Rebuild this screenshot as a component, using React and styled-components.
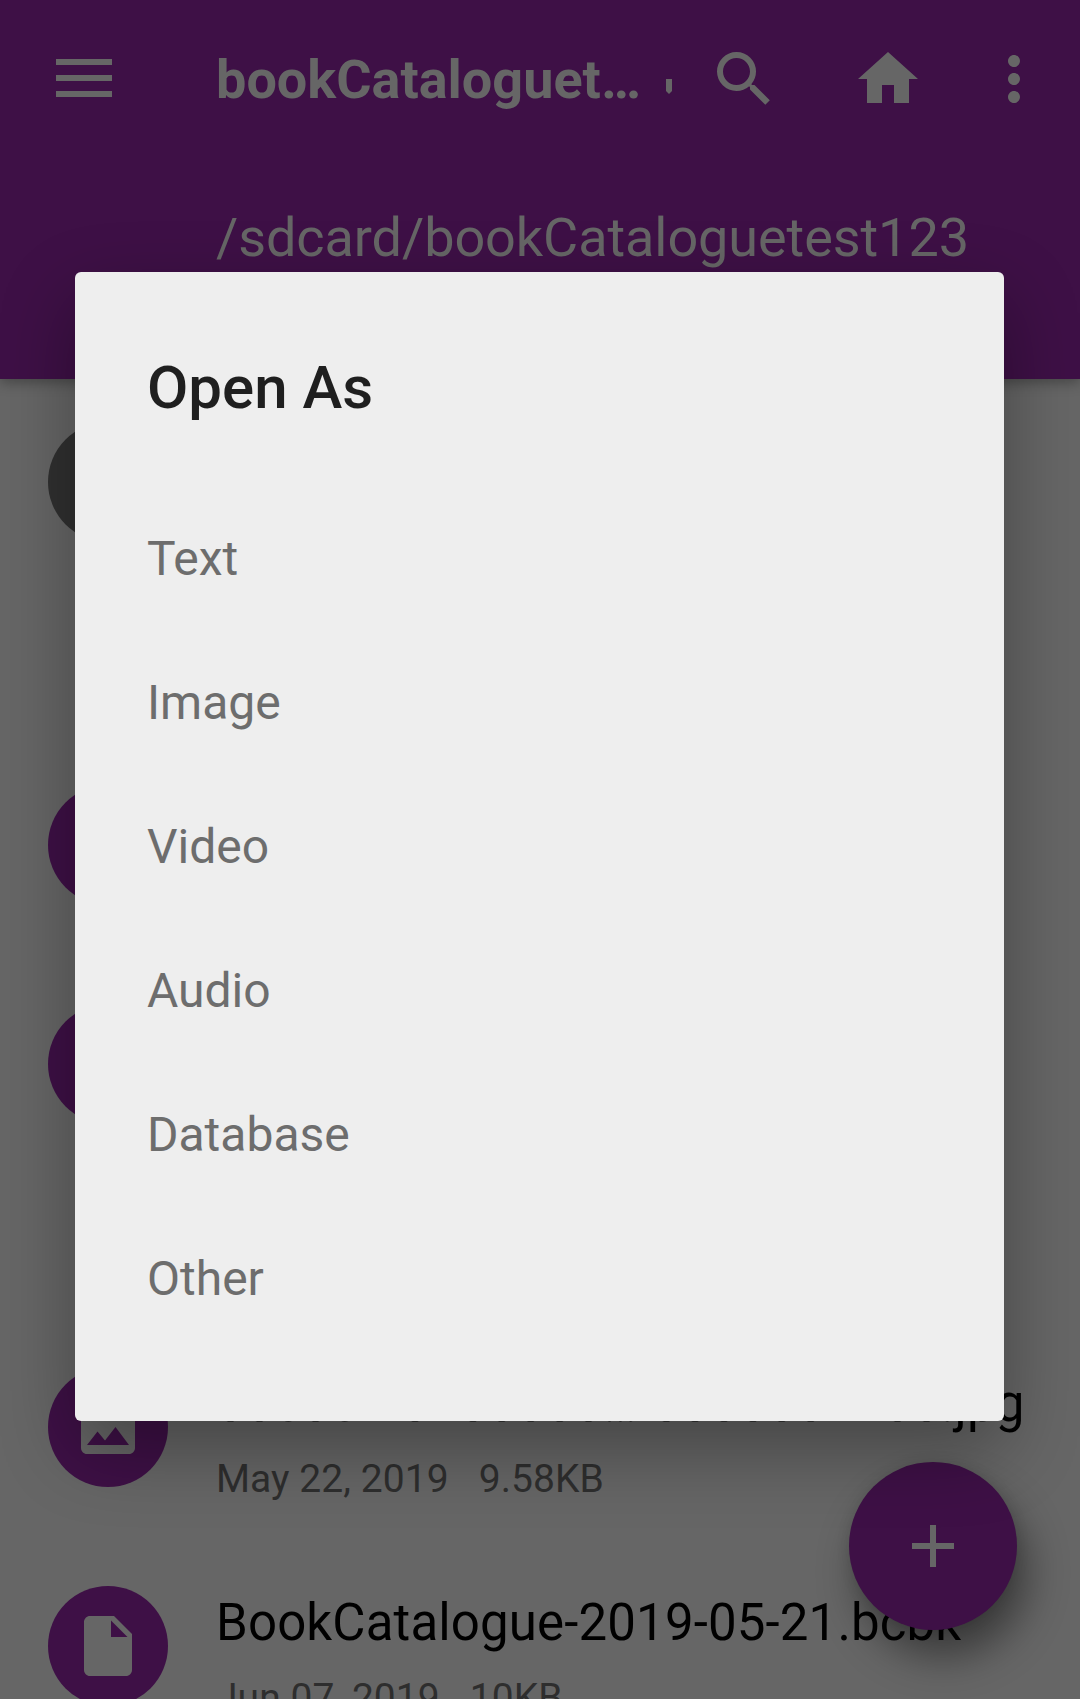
import React from 'react';
import styled, { createGlobalStyle } from 'styled-components';

const Global = createGlobalStyle`
  * { box-sizing: border-box; }
  body { margin: 0; font-family: Roboto, "Noto Sans", sans-serif; background: #666; }
`;

const Screen = styled.div`
  position: relative;
  width: 1080px;
  height: 1699px;
  overflow: hidden;
  background: #666;
`;

const AppBar = styled.header`
  position: relative;
  z-index: 1;
  height: 379px;
  margin-bottom: -7px;
  background: #3e1046;
  color: #666;
  box-shadow: 0 4px 12px rgba(0, 0, 0, 0.3);
`;

const Toolbar = styled.div`
  display: flex;
  align-items: center;
  height: 158px;
  padding: 0 30px 0 48px;
`;

const Icon = styled.svg`
  display: block;
  flex: none;
  width: 72px;
  height: 72px;
  fill: #666;
`;

const Title = styled.h1`
  flex: none;
  width: 446px;
  margin: 2px 0 0 96px;
  font-size: 54px;
  line-height: 64px;
  font-weight: 700;
  white-space: nowrap;
`;

const Caret = styled.svg`
  flex: none;
  width: 6px;
  height: 15px;
  margin: 15px 36px 0 4px;
  fill: #666;
`;

const Actions = styled.div`
  display: flex;
  gap: 72px;
`;

const Overflow = styled.div`
  margin-left: 54px;
`;

const Path = styled.div`
  padding: 48px 0 0 216px;
  font-size: 54px;
  line-height: 64px;
  letter-spacing: -0.08px;
  white-space: nowrap;
`;

const Row = styled.div`
  display: flex;
  height: 219px;
  padding: 50px 0 0 48px;
`;

const SectionGap = styled.div`
  height: 144px;
`;

const Badge = styled.div`
  display: flex;
  align-items: center;
  justify-content: center;
  flex: none;
  width: 120px;
  height: 120px;
  border-radius: 50%;
  background: ${(p) => (p.$muted ? '#303030' : '#3e1046')};
`;

const Details = styled.div`
  margin: 7px 0 0 48px;
  white-space: nowrap;
`;

const Name = styled.div`
  font-size: 51px;
  line-height: 60px;
  letter-spacing: ${(p) => p.$tracking || 0.14}px;
  color: #000;
`;

const Meta = styled.div`
  display: flex;
  gap: 30px;
  margin-top: 22px;
  font-size: 39px;
  line-height: 46px;
  letter-spacing: 0.06px;
  color: #2e2e2e;
`;

const Fab = styled.button`
  position: absolute;
  left: 849px;
  top: 1462px;
  display: flex;
  align-items: center;
  justify-content: center;
  width: 168px;
  height: 168px;
  padding: 0;
  border: 0;
  border-radius: 50%;
  background: #3e1046;
  box-shadow: 10px 26px 42px rgba(0, 0, 0, 0.44), 0 0 14px rgba(0, 0, 0, 0.1);
`;

const Dialog = styled.section`
  position: absolute;
  z-index: 2;
  left: 75px;
  top: 272px;
  width: 929px;
  height: 1149px;
  padding: 81px 72px 0;
  border-radius: 6px;
  background: #eee;
  box-shadow: 0 28px 76px rgba(0, 0, 0, 0.33);
`;

const DialogTitle = styled.h2`
  margin: 0 0 63px;
  font-size: 60px;
  line-height: 70px;
  font-weight: 500;
  color: #1f1f1f;
`;

const Option = styled.div`
  display: flex;
  align-items: center;
  height: 144px;
  font-size: 48px;
  color: #6d6d6d;
`;

const OPTIONS = ['Text', 'Image', 'Video', 'Audio', 'Database', 'Other'];

export default function App() {
  return (
    <>
      <Global />
      <Screen>
        <AppBar>
          <Toolbar>
            <Icon viewBox="0 0 72 72">
              <path d="M8 16h56v6H8zM8 32h56v6H8zM8 48h56v6H8z" />
            </Icon>
            <Title>bookCataloguet…</Title>
            <Caret viewBox="0 0 6 15">
              <path d="M0 0h6v12l-3 3-3-3z" />
            </Caret>
            <Actions>
              <Icon viewBox="0 0 24 24">
                <path d="M15.5 14h-.79l-.28-.27A6.47 6.47 0 0 0 16 9.5 6.5 6.5 0 1 0 9.5 16c1.61 0 3.09-.59 4.23-1.57l.27.28v.79l5.1 5.1L20.6 19.1l-5.1-5.1zm-6 0C7.01 14 5 11.99 5 9.5S7.01 5 9.5 5 14 7.01 14 9.5 11.99 14 9.5 14z" />
              </Icon>
              <Icon viewBox="0 0 24 24">
                <path d="M10 20v-6h4v6h5v-8h3L12 3 2 12h3v8z" />
              </Icon>
            </Actions>
            <Overflow>
              <Icon viewBox="0 0 24 24">
                <path d="M12 8c1.1 0 2-.9 2-2s-.9-2-2-2-2 .9-2 2 .9 2 2 2zm0 2c-1.1 0-2 .9-2 2s.9 2 2 2 2-.9 2-2-.9-2-2-2zm0 6c-1.1 0-2 .9-2 2s.9 2 2 2 2-.9 2-2-.9-2-2-2z" />
              </Icon>
            </Overflow>
          </Toolbar>
          <Path>/sdcard/bookCataloguetest123</Path>
        </AppBar>

        <Row><Badge $muted /></Row>
        <SectionGap />
        <Row><Badge /></Row>
        <Row><Badge /></Row>
        <SectionGap />
        <Row>
          <Badge>
            <Icon viewBox="0 0 24 24">
              <path d="M21 19V5c0-1.100-.9-2-2-2H5c-1.100 0-2 .9-2 2v14c0 1.100.9 2 2 2h14c1.100 0 2-.9 2-2zM8.500 13.500l2.500 3.010L14.500 12l4.500 6H5l3.500-4.500z" />
            </Icon>
          </Badge>
          <Details>
            <Name $tracking={0.25}>00e0e1-0100000…-0000001100.jpg</Name>
            <Meta><span>May 22, 2019</span><span>9.58KB</span></Meta>
          </Details>
        </Row>
        <Row>
          <Badge>
            <Icon viewBox="0 0 24 24">
              <path d="M6 2c-1.100 0-2 .9-2 2v16c0 1.100.9 2 2 2h12c1.100 0 2-.9 2-2V8l-6-6H6zm7 7V3.500L18.500 9H13z" />
            </Icon>
          </Badge>
          <Details>
            <Name>BookCatalogue-2019-05-21.bcbk</Name>
            <Meta><span>Jun 07, 2019</span><span>10KB</span></Meta>
          </Details>
        </Row>

        <Fab aria-label="Add">
          <Icon viewBox="0 0 24 24">
            <path d="M19 13h-6v6h-2v-6H5v-2h6V5h2v6h6v2z" />
          </Icon>
        </Fab>

        <Dialog>
          <DialogTitle>Open As</DialogTitle>
          {OPTIONS.map((label) => (
            <Option key={label}>{label}</Option>
          ))}
        </Dialog>
      </Screen>
    </>
  );
}
